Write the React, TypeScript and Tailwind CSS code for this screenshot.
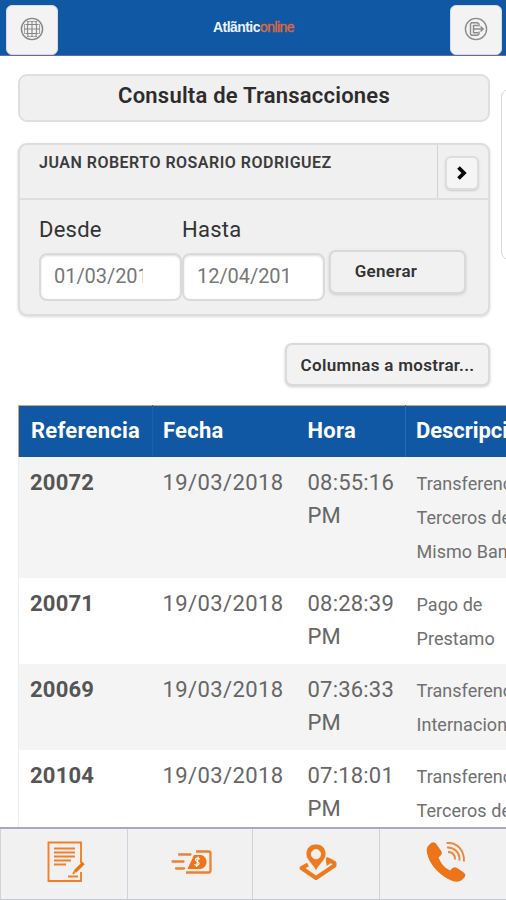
import type { ReactNode } from "react";

type Row = { ref: string; date: string; time: string; lines: string[]; cls: string };

const rows: Row[] = [
  { ref: "20072", date: "19/03/2018", time: "08:55:16", lines: ["Transferencia a", "Terceros del", "Mismo Banco"], cls: "h-[121px] bg-[#f4f4f4]" },
  { ref: "20071", date: "19/03/2018", time: "08:28:39", lines: ["Pago de", "Prestamo"], cls: "h-[86px] bg-white" },
  { ref: "20069", date: "19/03/2018", time: "07:36:33", lines: ["Transferencia", "Internacional"], cls: "h-[86px] bg-[#f4f4f4]" },
  { ref: "20104", date: "19/03/2018", time: "07:18:01", lines: ["Transferencia a", "Terceros del"], cls: "h-[87px] bg-white" },
];

function HeaderButton({ children }: { children: ReactNode }) {
  return (
    <button className="flex h-[50px] w-[52px] items-center justify-center rounded-[6px] border border-[#d9d9e4] bg-[#f3f3f3] pb-[2px]">
      {children}
    </button>
  );
}

function GlobeIcon() {
  return (
    <svg width="24" height="24" viewBox="0 0 24 24" fill="none" stroke="#858585" strokeWidth="1.1">
      <circle cx="12" cy="12" r="10.6" strokeWidth="1.4" />
      <path d="M12 4v16M4 12h16M5.500 7.500h13M5.500 16.500h13" />
      <path d="M8 4Q6.800 12 8 20M16 4Q17.200 12 16 20" />
      <path d="M7 4.500h10M7 19.500h10M4.500 7v10M19.500 7v10" strokeOpacity=".7" />
    </svg>
  );
}

function ExitIcon() {
  return (
    <svg width="24" height="24" viewBox="0 0 24 24" fill="none" stroke="#8b8b8b" strokeWidth="1.4">
      <circle cx="12" cy="12" r="10.6" />
      <path d="M15 9.500V7L13.500 5.800H7.500L6.500 7v10l1 1.200h6L15 17v-2.500" />
      <path d="M9.500 8v8.200M9.500 8.500H14M9.500 15.800H14M9.500 12H19M16.500 9.500l2.700 2.500-2.700 2.500" />
    </svg>
  );
}

function DocumentIcon() {
  return (
    <svg width="38" height="42" viewBox="0 0 38 42" fill="none" stroke="#f0802f" strokeWidth="1.900">
      <path d="M34 22V1.500H1.500v38.500H34V31" />
      <path d="M7 7.500h21M7 11.500h21M7 15.500h21M7 19.500h17M7 23.500h12M21 35.500h10" strokeWidth="1.8" />
      <path d="m28 30.500 8.500-8.500" stroke="#ed7419" strokeWidth="3.400" />
      <path d="m26 33 2-3" strokeWidth="2" />
    </svg>
  );
}

function MoneyIcon() {
  return (
    <svg width="41" height="26" viewBox="0 0 41 26" fill="none" stroke="#f0802f" strokeWidth="2.300">
      <path d="M25 2.500h12.500q2 0 2 2v17q0 2-2 2H15" />
      <path d="M8 5.500h11.500M1.500 12.500h11M5 19.500h8" strokeLinecap="round" strokeWidth="2.300" />
      <path d="M23 6h6.500c8 1 8 12.500 0 14H16.500Z" fill="#ed7419" stroke="none" />
      <path d="M29 10q-4-2-4.500.5c-.2 2 4 2 3.600 4.200-.4 2-3.200 1.800-4.800.8M27.300 7.500l-1.800 10.500" stroke="#fff" strokeWidth="1.200" />
    </svg>
  );
}

function MapIcon() {
  return (
    <svg width="40" height="38" viewBox="0 0 40 38">
      <path d="M10 20.500 3.500 24 18 34 36.500 21.500V19L30 15.500V19" fill="none" stroke="#ed7b1d" strokeWidth="4" strokeLinejoin="round" />
      <path d="M28.500 22v-9l7.500 4Z" fill="#ed7b1d" />
      <path fillRule="evenodd" d="M18 0C11.500 0 8 4.800 8 10c0 6 6.500 9.500 10 17C21.500 19.500 28 16 28 10 28 4.800 24.500 0 18 0m0 5.500a4.700 4.700 0 1 0 0 9.400 4.700 4.700 0 0 0 0-9.400" fill="#ed7b1d" stroke="#f1f1f1" strokeWidth=".8" />
    </svg>
  );
}

function PhoneIcon() {
  return (
    <svg width="40" height="42" viewBox="0 0 40 42">
      <path d="M3 4C7 0 9 1 11 4l4.500 6.500c1 2 0 3.500-3 6 3 7 6 10 11.500 13 3-3 4.500-4 7-2.500l6 4c3 2 3 4 0 7-4 4-9 3-15 0C11 32 3 22 1 12 .2 8 1 6 3 4" fill="#ed7419" />
      <g fill="none" stroke="#f0883c" strokeWidth="2">
        <path d="M20.500 2C31 1 38.500 9 38 20.500" />
        <path d="M21 6.500c7-.5 13 5 12.500 13" />
        <path d="M22 11c4.500 0 7 3 7 7.500" />
      </g>
    </svg>
  );
}

function DateField({ label, value, clip }: { label: string; value: string; clip: string }) {
  return (
    <label className="flex w-[143px] flex-col">
      <span className="h-[34px] text-[22px] leading-[34px] tracking-[0.250px] text-[#333]">{label}</span>
      <span className="mt-[6px] flex h-[48px] items-center rounded-[8px] border-2 border-[#dadada] bg-white pb-[2px] pl-[13px] shadow-[inset_0_1px_2px_#ddd]">
        <span className={`${clip} overflow-hidden text-[20px] tracking-[-0.050px] whitespace-nowrap text-[#777]`}>{value}</span>
      </span>
    </label>
  );
}

export default function App() {
  return (
    <div className="flex h-[900px] w-[506px] flex-col overflow-hidden bg-white font-['Roboto',sans-serif]">
      <header className="flex h-[56px] shrink-0 items-start justify-between border-b border-[#6a64ac] bg-[#1057a4] pt-[5px] pr-[4px] pl-[6px]">
        <HeaderButton><GlobeIcon /></HeaderButton>
        <div className="pt-[12px] pr-[1px] font-['Liberation_Sans',Arial,sans-serif] text-[14px] leading-[20px] tracking-[-0.550px] whitespace-nowrap">
          <b className="text-[#eaf3ff]">Atlãntic</b>
          <span className="text-[#db6843] [-webkit-text-stroke:0.400px_#db6843]">online</span>
        </div>
        <HeaderButton><ExitIcon /></HeaderButton>
      </header>

      <main className="min-h-0 flex-1 overflow-hidden pl-[18px]">
        <div className="flex h-[330px] w-[600px] gap-[11px]">
          <div className="flex w-[472px] shrink-0 flex-col">
            <h1 className="mt-[18px] flex h-[48px] items-center justify-center rounded-[9px] border-2 border-[#dfdfdf] bg-[#f0f0f0] pb-[4px] text-[22px] font-semibold tracking-[0.220px] text-[#2c2c2c]">
              Consulta de Transacciones
            </h1>

            <section className="mt-[21px] h-[175px] rounded-[9px] border-2 border-[#dddddd] bg-[#f0f0f0] shadow-[0_1px_3px_#d8d8d8]">
              <div className="flex h-[55px] border-b-2 border-[#dedede]">
                <div className="flex-1 pt-[7px] pl-[19px] text-[16px] leading-[21px] font-semibold tracking-[0.500px] text-[#3b3b3b]">
                  JUAN ROBERTO ROSARIO RODRIGUEZ
                </div>
                <div className="flex w-[51px] items-center justify-center border-l border-[#d2d2d2] pt-[3px] pr-[2px]">
                  <button className="flex h-[34px] w-[34px] items-center justify-center rounded-[6px] border-2 border-[#dddddd] bg-[#f5f5f5] shadow-[0_1px_2px_#ccc]">
                    <svg width="12" height="14" viewBox="0 0 12 14" fill="none" stroke="#080808" strokeWidth="3.800">
                      <path d="m2.500 1.500 5.500 5.500-5.500 5.500" />
                    </svg>
                  </button>
                </div>
              </div>
              <div className="flex pt-[13px] pl-[19px]">
                <DateField label="Desde" value="01/03/2018" clip="w-[89px]" />
                <DateField label="Hasta" value="12/04/2018" clip="w-[91px]" />
                <button className="mt-[37px] ml-[4px] h-[44px] w-[137px] rounded-[7px] border-2 border-[#d9d9d9] bg-[#f1f1f1] pr-[23px] text-[17px] font-semibold tracking-[0.300px] text-[#333] shadow-[0_1px_3px_#ccc]">
                  Generar
                </button>
              </div>
            </section>

            <button className="mt-[27px] h-[43px] w-[205px] self-end rounded-[7px] border-2 border-[#dadada] bg-[#f2f2f2] pt-[2px] text-[17px] font-semibold tracking-[0.300px] text-[#333] shadow-[0_1px_3px_#ccc]">
              Columnas a mostrar...
            </button>
          </div>
          <div className="mt-[33px] h-[171px] w-[90px] shrink-0 rounded-[8px] border border-[#d8d8d8] bg-white" />
        </div>

        <table className="mt-[19px] w-[600px] table-fixed border-collapse">
          <colgroup>
            <col className="w-[134px]" />
            <col className="w-[144px]" />
            <col className="w-[109px]" />
            <col className="w-[213px]" />
          </colgroup>
          <thead>
            <tr className="h-[51px] border-t border-l border-[#c7a77b] bg-[#1057a4] text-left text-[22px] tracking-[0.250px] text-white">
              <th className="pb-px pl-[12px] font-bold">Referencia</th>
              <th className="border-l border-[#1b60ab] pb-px pl-[10px] font-bold">Fecha</th>
              <th className="pb-px pl-[11px] font-bold">Hora</th>
              <th className="border-l border-[#2d68ae] pb-px pl-[10px] font-bold tracking-[-0.050px]">Descripción</th>
            </tr>
          </thead>
          <tbody>
            {rows.map((r) => (
              <tr key={r.ref} className={`${r.cls} border-l border-[#eeeeee] align-top text-[22px] leading-[33.500px] tracking-[0.400px] text-[#666]`}>
                <td className="pt-[9px] pl-[11px] font-bold tracking-[0.200px] text-[#555]">{r.ref}</td>
                <td className="pt-[9px] pl-[10px]">{r.date}</td>
                <td className="pt-[9px] pl-[11px] tracking-[0.200px]">{r.time}<br />PM</td>
                <td className="pt-[10px] pl-[11px] text-[18px] leading-[34.300px] tracking-[0.050px] whitespace-nowrap text-[#707070]">
                  {r.lines.map((line) => <div key={line}>{line}</div>)}
                </td>
              </tr>
            ))}
          </tbody>
        </table>
      </main>

      <nav className="grid h-[73px] shrink-0 grid-cols-[128px_125px_127px_1fr] border-t-2 border-b border-[#aaa5c9] border-b-[#c9c9d2] bg-[#f1f1f1]">
        <button className="flex items-center justify-center border-r border-l border-[#d2d2dc] pb-[4px] pl-[4px]"><DocumentIcon /></button>
        <button className="flex items-center justify-center border-r border-[#d2d2dc] pb-[4px] pl-[2px]"><MoneyIcon /></button>
        <button className="flex items-center justify-center border-r border-[#d2d2dc] pb-[2px] pl-[3px]"><MapIcon /></button>
        <button className="flex items-center justify-center pb-[5px] pl-[6px]"><PhoneIcon /></button>
      </nav>
    </div>
  );
}
